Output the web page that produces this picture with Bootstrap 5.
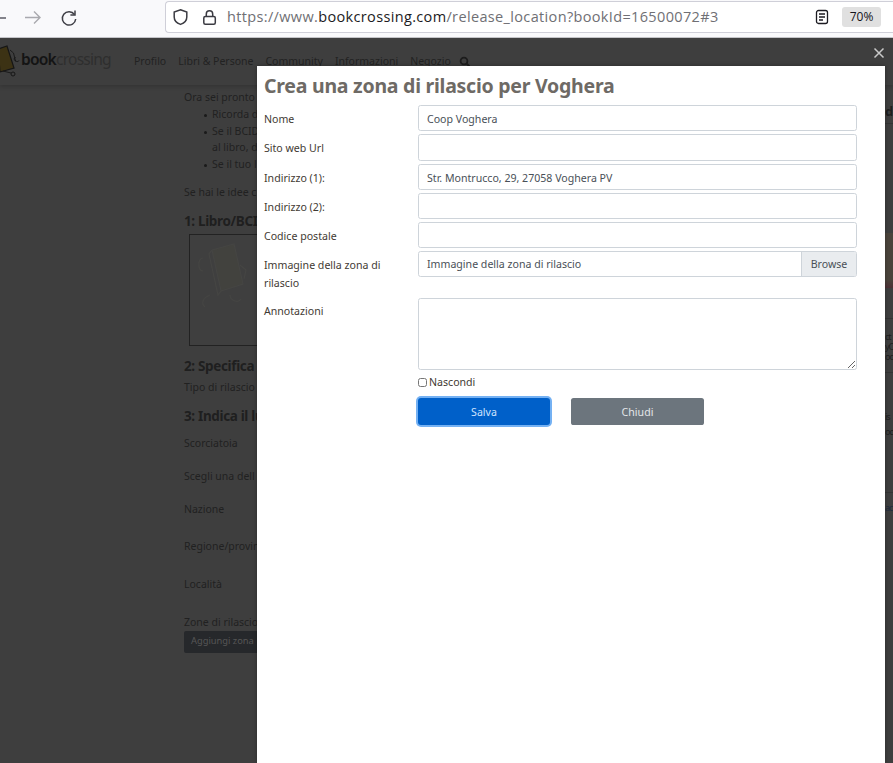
<!DOCTYPE html>
<html lang="it">
<head>
<meta charset="utf-8">
<title>Crea una zona di rilascio</title>
<link href="https://cdn.jsdelivr.net/npm/bootstrap@5.3.0/dist/css/bootstrap.min.css" rel="stylesheet">
<style>
html,body{height:100%;overflow:hidden}
body{position:relative;width:893px;height:763px;background:#3e3e3e;font-family:"Noto Sans",sans-serif;font-size:11px;color:#2c2a28}
.chrome{height:38px;background:#f9f9fb;border-bottom:1px solid #c8c8cc;color:#3a3a3c}
.nav-ic{width:20px;height:20px;flex:none}
.urlbar{position:absolute;left:165px;top:1px;width:728px;height:32px;background:#fff;border:1px solid #cfcfd8;border-right:0;border-radius:4px 0 0 4px;padding-left:6px}
.lockic{margin-left:13px}
.urltext{font-family:"Open Sans","Noto Sans",sans-serif;font-size:14.5px;color:#6f6f74;margin-left:10px;letter-spacing:.35px;white-space:nowrap}
.urltext b{font-weight:400;color:#1c1b22}
.zoomchip{position:absolute;left:842px;top:7px;width:39px;height:20px;background:#e0e0e0;border-radius:3px;font-size:12px;color:#15141a;font-family:"Open Sans",sans-serif;text-align:center;line-height:20px}
.bgnav{height:47px;background:#3e3e3e;box-shadow:0 2px 4px rgba(0,0,0,.16)}
.logoic{position:absolute;left:0;top:6px}
.brand{font-size:15.6px;letter-spacing:-.8px;color:#2e2e2e;font-family:"Noto Sans",sans-serif;font-weight:400;margin-left:21px;margin-top:-3px;width:90px;flex:none}
.brand b{color:#141414;font-weight:600}
.bgnav a{color:#222;font-size:10.5px;text-decoration:none}
.firstlink{margin-left:23px}
.navlink{margin-left:12px}
.searchic{margin-left:8px}
.bgcontent{position:absolute;left:184px;top:90px;color:#212121;font-size:10.5px;white-space:nowrap}
.bgcontent>*{position:absolute;left:0;margin:0}
.bgcontent h6{font-size:13.5px;font-weight:700;color:#1f1f1f;letter-spacing:-.35px}
.bgcontent li{position:absolute;left:28px;list-style:none}
.bgcontent li.dot::before{content:"";position:absolute;left:-8px;top:7px;width:3px;height:3px;border-radius:50%;background:#1a1a1a}
.bookph{left:5px!important;top:144px;width:100px;height:112px;border:1px solid #222;background:#3f3f3f}
.addbtn{top:541px;width:90px;height:22px;background:#26282b;color:#565656;border-radius:2px;padding:3px 7px;font-size:9.3px}
.bgright{position:absolute;left:885px;top:100px;width:8px;height:450px;color:#1e1e1e;overflow:hidden;font-size:9px;letter-spacing:-1px;line-height:10px}
.bgright>*{position:absolute;left:0}
.rline{width:8px;border-top:1px solid #333}
.rphoto{top:133px;width:8px;height:55px;background:linear-gradient(#4a433b 85%,#4d3035)}
.dialog{position:absolute;left:257px;top:66px;width:628px;height:697px;background:#fff;padding:8px 7px;z-index:5;box-shadow:0 0 4px rgba(0,0,0,.3)}
.dialog h1{font-family:"Noto Sans",sans-serif;font-weight:700;font-size:19.5px;letter-spacing:-.25px;color:#6e6a65;margin:0 0 7px;line-height:24px}
.frow{display:flex;margin-bottom:3px;width:593px}
.flabel{width:154px;flex:none;padding:6px 24px 0 0;color:#3f3a33;line-height:17.5px;font-size:10.6px}
.fcontrol{flex:1}
.tinput{height:26.3px;padding:3px 8px 1px;font-size:10.6px;border:1px solid #ced4da;border-radius:2.6px;color:#495057}
.uploadbox{display:flex;height:26px;border:1px solid #ced4da;border-radius:2.6px;overflow:hidden;font-size:10.6px;color:#495057;align-items:center}
.uploadbox .ph{flex:1;padding:1px 0 0 8px}
.uploadbox .br{width:55px;height:100%;background:#e9ecef;border-left:1px solid #ced4da;text-align:center;line-height:24px}
.uprow{margin-bottom:6px}
.notesrow{margin-bottom:0}
.notesrow .flabel{padding-top:5px}
.tarea{height:72px;border:1px solid #ced4da;border-radius:2.6px;font-size:10.6px;padding:4px 8px;display:block;width:100%}
.hidecheck{display:flex;align-items:center;gap:2px;margin:4px 0 0 154px;height:17px;color:#3f3a33;font-size:10.6px}
.hidecheck input{margin:0;width:9px;height:9px}
.actbtns{display:flex;gap:21px;margin:7px 0 0 154px}
.bsave{width:132px;height:27px;background:#0060c9;border:0;color:#cfe3ff;font-size:10.6px;border-radius:3px;box-shadow:0 0 0 2px #74b1f3;padding:2px 0 0!important}
.bclose{width:133px;height:27px;background:#6c757d;border:0;color:#e3e6e9;font-size:10.6px;border-radius:2.6px;padding:2px 0 0!important}
.xclose{position:absolute;left:872px;top:46px;width:14px;height:14px;z-index:6}
</style>
</head>
<body>
<header class="chrome position-relative">
  <svg class="position-absolute" style="left:-6px;top:9px" width="20" height="20" viewBox="0 0 20 20" fill="none" stroke="#5b5b66" stroke-width="1.5"><path d="M3 9h9"/></svg>
  <svg class="position-absolute nav-ic" style="left:23px;top:8px" viewBox="0 0 20 20" fill="none" stroke="#a9a9ae" stroke-width="1.4"><path d="M2 9.500h15M11 3.500l6 6-6 6"/></svg>
  <svg class="position-absolute nav-ic" style="left:59px;top:8px" viewBox="0 0 20 20" fill="none" stroke="#3f3f46" stroke-width="1.5"><path d="M15.500 6.500A6.700 6.700 0 1 0 16.700 11"/><path d="M16 2.500v4.600h-4.600"/></svg>
  <div class="urlbar d-flex align-items-center">
    <svg width="17" height="18" viewBox="0 0 17 18" fill="none" stroke="#3b3b42" stroke-width="1.5"><path d="M8.500 1.800l6.300 2.200v5c0 3.700-2.600 6.200-6.300 7.400C4.800 15.200 2.200 12.700 2.200 9V4z"/></svg>
    <svg class="lockic" width="15" height="17" viewBox="0 0 15 17" fill="none" stroke="#3b3b42" stroke-width="1.5"><rect x="1.800" y="7.500" width="11.500" height="7.800" rx="1.500"/><path d="M4.300 7.500V5a3.200 3.200 0 0 1 6.400 0v2.500"/></svg>
    <span class="urltext">https://www.<b>bookcrossing.com</b>/release_location?bookId=16500072#3</span>
  </div>
  <svg class="position-absolute" style="left:815px;top:9px" width="15" height="16" viewBox="0 0 15 16" fill="none" stroke="#1c1b22" stroke-width="1.300"><rect x="1.500" y="1.500" width="11" height="13" rx="2"/><path d="M4 5h6M4 8h6M4 11h4"/></svg>
  <div class="zoomchip">70%</div>
</header>

<nav class="bgnav d-flex align-items-center position-relative">
  <svg class="logoic" width="22" height="34" viewBox="0 0 22 34" fill="none"><path d="M-2 5L7 2l7 22-14 4z" fill="#3c3214" stroke="#161616" stroke-width="1.200"/><path d="M10 6l3.500 3 2 8c2 1 3 .5 3.500-.5M16 17c-2 0-2.500-3-.5-3.500M3 27l8 2" stroke="#161616" stroke-width=".9"/><circle cx="13" cy="30" r="2" stroke="#161616" stroke-width="1"/></svg>
  <span class="brand"><b>book</b>crossing</span>
  <a class="firstlink" href="#">Profilo</a>
  <a class="navlink" href="#">Libri &amp; Persone</a>
  <a class="navlink" href="#">Community</a>
  <a class="navlink" href="#">Informazioni</a>
  <a class="navlink" href="#">Negozio</a>
  <svg class="searchic" width="12" height="12" viewBox="0 0 12 12" fill="none" stroke="#1c1c1c" stroke-width="1.800"><circle cx="5" cy="5" r="3.400"/><path d="M7.500 7.500l3 3"/></svg>
</nav>

<main class="bgcontent">
  <p style="top:0">Ora sei pronto</p>
  <ul class="m-0 p-0">
    <li class="dot" style="top:17px">Ricorda di</li>
    <li class="dot" style="top:34px">Se il BCID</li>
    <li style="top:50px">al libro, d</li>
    <li class="dot" style="top:67px">Se il tuo li</li>
  </ul>
  <p style="top:95px">Se hai le idee c</p>
  <h6 style="top:123px">1: Libro/BCID</h6>
  <div class="bookph">
    <svg width="70" height="80" viewBox="0 0 70 80" fill="none" stroke="#454543" stroke-width="1.200"><path d="M22 15l22-6 9 40-22 7z" fill="#42423e"/><path d="M22 15l-3 4 9 41 3-4M13 23c-6 1-5 13 0 13M20 60c-6 2-10 8-5 12M40 60c0 5 8 9 11 4M50 30l6 5-2 9"/></svg>
  </div>
  <h6 style="top:268px">2: Specifica</h6>
  <p style="top:290px">Tipo di rilascio</p>
  <h6 style="top:318px">3: Indica il lu</h6>
  <p style="top:346px">Scorciatoia</p>
  <p style="top:379px">Scegli una dell</p>
  <p style="top:412px">Nazione</p>
  <p style="top:449px">Regione/provin</p>
  <p style="top:487px">Località</p>
  <p style="top:525px">Zone di rilascio</p>
  <div class="addbtn">Aggiungi zona</div>
</main>

<aside class="bgright">
  <strong style="top:5px;font-size:13px;line-height:13px;letter-spacing:0">d</strong>
  <div class="rline" style="top:23px"></div>
  <div class="rphoto"></div>
  <div class="rline" style="top:218px"></div>
  <span style="top:232px">ct<br>yC<br>oo</span>
  <div class="rline" style="top:272px"></div>
  <span style="top:312px">is</span><span style="top:327px">od</span>
  <div class="rline" style="top:392px"></div>
  <span style="top:403px;color:#1d2a3d">ac</span>
</aside>

<svg class="xclose" viewBox="0 0 14 14" fill="none" stroke="#c9c9c9" stroke-width="1.500"><path d="M2.500 2.500l9 9M11.500 2.500l-9 9"/></svg>

<section class="dialog" role="dialog" aria-label="Crea una zona di rilascio per Voghera">
  <h1>Crea una zona di rilascio per Voghera</h1>
  <form>
    <div class="frow"><label class="flabel">Nome</label><div class="fcontrol"><input class="form-control tinput" value="Coop Voghera"></div></div>
    <div class="frow"><label class="flabel">Sito web Url</label><div class="fcontrol"><input class="form-control tinput"></div></div>
    <div class="frow"><label class="flabel">Indirizzo (1):</label><div class="fcontrol"><input class="form-control tinput" value="Str. Montrucco, 29, 27058 Voghera PV"></div></div>
    <div class="frow"><label class="flabel">Indirizzo (2):</label><div class="fcontrol"><input class="form-control tinput"></div></div>
    <div class="frow"><label class="flabel">Codice postale</label><div class="fcontrol"><input class="form-control tinput"></div></div>
    <div class="frow uprow"><label class="flabel">Immagine della zona di rilascio</label><div class="fcontrol"><div class="uploadbox"><span class="ph">Immagine della zona di rilascio</span><span class="br">Browse</span></div></div></div>
    <div class="frow notesrow"><label class="flabel">Annotazioni</label><div class="fcontrol"><textarea class="form-control tarea"></textarea></div></div>
    <label class="hidecheck"><input type="checkbox">Nascondi</label>
    <div class="actbtns"><button type="button" class="btn bsave">Salva</button><button type="button" class="btn bclose">Chiudi</button></div>
  </form>
</section>
</body>
</html>
